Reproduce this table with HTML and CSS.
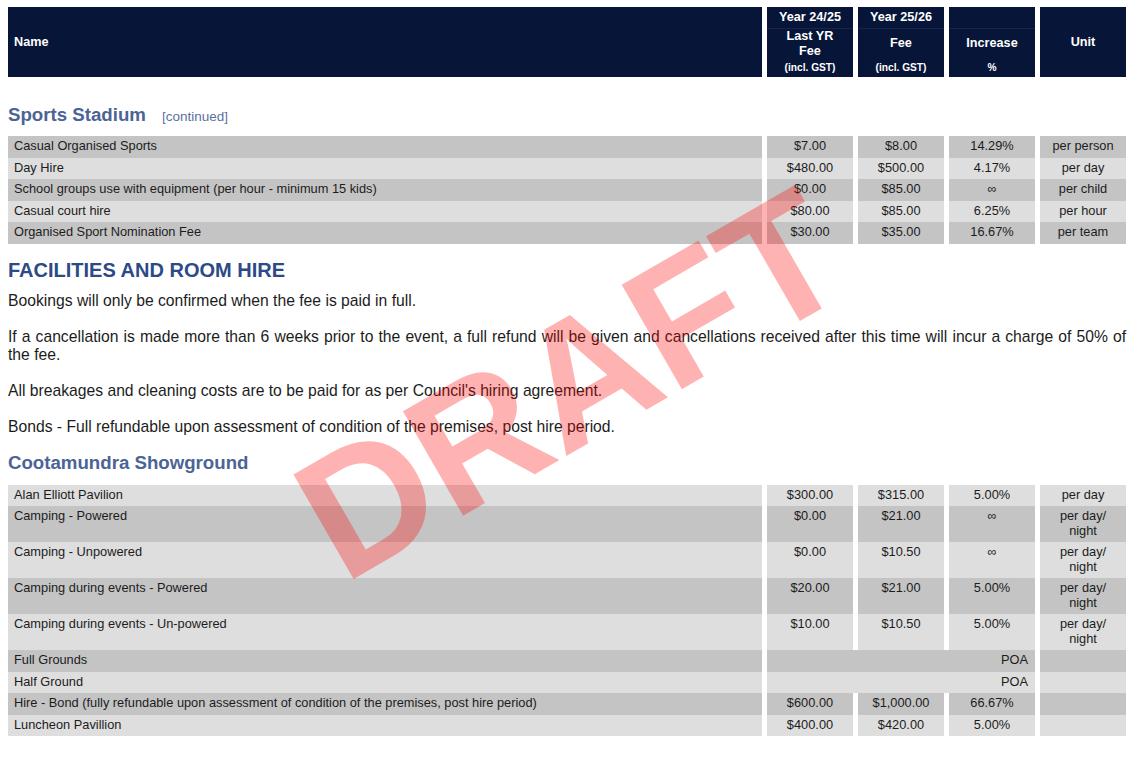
FILE: index.html
```html
<!DOCTYPE html>
<html lang="en">
<head>
<meta charset="utf-8">
<title>Fees and Charges</title>
<link rel="stylesheet" href="styles.css">
</head>
<body>
<div class="page">
  <table class="fees head">
    <colgroup><col class="c-name"><col class="c-num"><col class="c-num"><col class="c-num"><col class="c-unit"></colgroup>
    <tr class="h1"><th rowspan="3" class="name">Name</th><th>Year 24/25</th><th>Year 25/26</th><th></th><th rowspan="3">Unit</th></tr>
    <tr class="h2"><th>Last YR<br>Fee</th><th>Fee</th><th>Increase</th></tr>
    <tr class="h3"><th class="small">(incl. GST)</th><th class="small">(incl. GST)</th><th class="small">%</th></tr>
  </table>

  <h2 class="sub first">Sports Stadium<span class="cont">[continued]</span></h2>
  <table class="fees">
    <colgroup><col class="c-name"><col class="c-num"><col class="c-num"><col class="c-num"><col class="c-unit"></colgroup>
    <tr class="dark"><td class="name">Casual Organised Sports</td><td>$7.00</td><td>$8.00</td><td>14.29%</td><td>per person</td></tr>
    <tr class="light"><td class="name">Day Hire</td><td>$480.00</td><td>$500.00</td><td>4.17%</td><td>per day</td></tr>
    <tr class="dark"><td class="name">School groups use with equipment (per hour - minimum 15 kids)</td><td>$0.00</td><td>$85.00</td><td>∞</td><td>per child</td></tr>
    <tr class="light"><td class="name">Casual court hire</td><td>$80.00</td><td>$85.00</td><td>6.25%</td><td>per hour</td></tr>
    <tr class="dark"><td class="name">Organised Sport Nomination Fee</td><td>$30.00</td><td>$35.00</td><td>16.67%</td><td>per team</td></tr>
  </table>

  <h1 class="section">FACILITIES AND ROOM HIRE</h1>
  <p>Bookings will only be confirmed when the fee is paid in full.</p>
  <p>If a cancellation is made more than 6 weeks prior to the event, a full refund will be given and cancellations received after this time will incur a charge of 50% of the fee.</p>
  <p>All breakages and cleaning costs are to be paid for as per Council's hiring agreement.</p>
  <p>Bonds - Full refundable upon assessment of condition of the premises, post hire period.</p>

  <h2 class="sub second">Cootamundra Showground</h2>
  <table class="fees">
    <colgroup><col class="c-name"><col class="c-num"><col class="c-num"><col class="c-num"><col class="c-unit"></colgroup>
    <tr class="light"><td class="name">Alan Elliott Pavilion</td><td>$300.00</td><td>$315.00</td><td>5.00%</td><td>per day</td></tr>
    <tr class="dark"><td class="name">Camping - Powered</td><td>$0.00</td><td>$21.00</td><td>∞</td><td>per day/<br>night</td></tr>
    <tr class="light"><td class="name">Camping - Unpowered</td><td>$0.00</td><td>$10.50</td><td>∞</td><td>per day/<br>night</td></tr>
    <tr class="dark"><td class="name">Camping during events - Powered</td><td>$20.00</td><td>$21.00</td><td>5.00%</td><td>per day/<br>night</td></tr>
    <tr class="light"><td class="name">Camping during events - Un-powered</td><td>$10.00</td><td>$10.50</td><td>5.00%</td><td>per day/<br>night</td></tr>
    <tr class="dark"><td class="name">Full Grounds</td><td colspan="3" class="poa">POA</td><td></td></tr>
    <tr class="light"><td class="name">Half Ground</td><td colspan="3" class="poa">POA</td><td></td></tr>
    <tr class="dark"><td class="name">Hire - Bond (fully refundable upon assessment of condition of the premises, post hire period)</td><td>$600.00</td><td>$1,000.00</td><td>66.67%</td><td></td></tr>
    <tr class="light"><td class="name">Luncheon Pavillion</td><td>$400.00</td><td>$420.00</td><td>5.00%</td><td></td></tr>
  </table>

  <div class="watermark">DRAFT</div>
</div>
</body>
</html>
```

FILE: styles.css
```css
html, body {
  margin: 0;
  padding: 0;
  background: #ffffff;
}

body {
  font-family: "Liberation Sans", Arial, sans-serif;
  color: #1c1c1c;
}

.page {
  position: relative;
  width: 1118px;
  padding: 7px 8px 0;
}

.fees {
  border-collapse: separate;
  border-spacing: 5px 0;
  table-layout: fixed;
  width: 1128px;
  margin: 0 -5px;
}

col.c-name { width: 754px; }
col.c-num { width: 86px; }
col.c-unit { width: 86px; }

.fees th {
  background: #061538;
  color: #ffffff;
  font-weight: bold;
  font-size: 12.67px;
  line-height: 14.3px;
  padding: 0 4px;
  text-align: center;
  vertical-align: middle;
}

.fees th.name {
  text-align: left;
  padding-left: 6px;
}

.fees th.small {
  font-size: 10.2px;
}

.fees tr.h1 { height: 21px; }
.fees tr.h2 { height: 31px; }
.fees tr.h3 { height: 18px; }

.fees tr.h2 th {
  box-shadow: inset 0 1px 0 #16254a;
}

.fees td {
  font-size: 12.8px;
  line-height: 14.5px;
  padding: 3px 6px 4px;
  text-align: center;
  vertical-align: top;
  color: #1c1c1c;
  white-space: nowrap;
}

.fees td.name {
  text-align: left;
}

.fees td.poa {
  text-align: right;
  padding-right: 7px;
}

.fees tr.dark td { background: #c4c4c4; }
.fees tr.light td { background: #dedede; }

.sub {
  font-size: 18.67px;
  line-height: 22px;
  font-weight: bold;
  color: #4b6496;
  margin: 16px 0 10.5px;
}

.sub.first {
  margin-top: 26.5px;
  margin-bottom: 8.5px;
}

.cont {
  font-size: 13.5px;
  font-weight: normal;
  color: #5b70a0;
  margin-left: 16px;
}

.section {
  font-size: 20px;
  line-height: 24px;
  font-weight: bold;
  color: #2c4a86;
  margin: 14px 0 10.5px;
}

p {
  margin: 0;
  font-size: 15.7px;
  line-height: 18px;
  text-align: justify;
  color: #1c1c1c;
}

p + p {
  margin-top: 18px;
}

.watermark {
  position: absolute;
  left: 570px;
  top: 384px;
  transform: translate(-50%, -50%) rotate(-30deg);
  font-family: "Liberation Sans", Arial, sans-serif;
  font-weight: bold;
  font-size: 175px;
  line-height: 1;
  color: rgba(255, 0, 0, 0.3);
  white-space: nowrap;
  pointer-events: none;
}
```
